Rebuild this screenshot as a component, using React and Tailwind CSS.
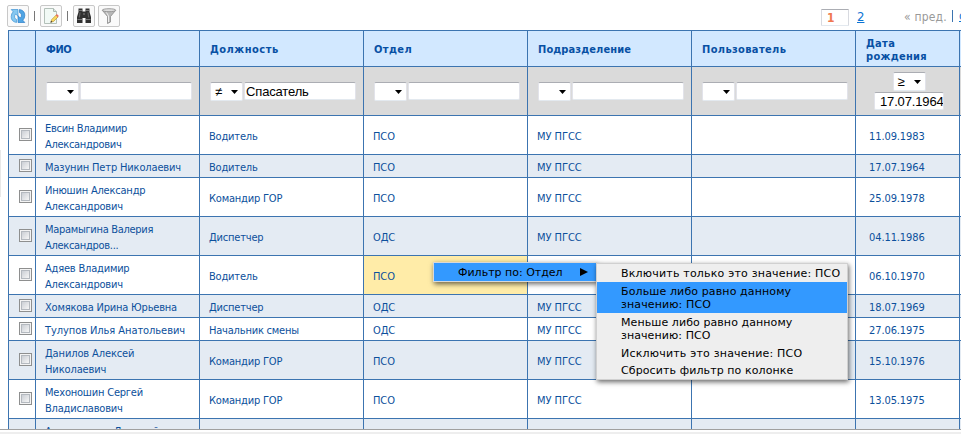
const COLS = 'grid grid-cols-[27px_164px_164px_164px_164px_164px_104px_2px] ml-2 w-[953px]';
const CELL = 'border-l border-t border-[#3c74b0] min-w-0 overflow-hidden';
const FIELD = "rounded-[2px] border border-t-[#abadb3] border-x-[#e2e3ea] border-b-[#e3e9ef] bg-white font-['Liberation_Sans',sans-serif] text-[13px] leading-none text-black";

const HEADERS = [
  ['ФИО', 'tracking-[-0.4px]'],
  ['Должность', 'tracking-[0.5px]'],
  ['Отдел', 'tracking-[0.4px]'],
  ['Подразделение', 'tracking-[0.1px]'],
  ['Пользователь', 'tracking-[0.35px]'],
];

const FILTERS = [
  ['', ''],
  ['≠', 'Спасатель'],
  ['', ''],
  ['', ''],
  ['', ''],
];

const ROWS = [
  { name: ['Евсин Владимир', 'Александрович'], job: 'Водитель', dept: 'ПСО', date: '11.09.1983', spacing: 'tracking-[-0.3px]' },
  { name: ['Мазунин Петр Николаевич'], job: 'Водитель', dept: 'ПСО', date: '17.07.1964', spacing: 'tracking-[-0.15px]' },
  { name: ['Инюшин Александр', 'Александрович'], job: 'Командир ГОР', dept: 'ПСО', date: '25.09.1978', spacing: 'tracking-[-0.2px]' },
  { name: ['Марамыгина Валерия', 'Александров...'], job: 'Диспетчер', dept: 'ОДС', date: '04.11.1986', spacing: 'tracking-[-0.3px]' },
  { name: ['Адяев Владимир', 'Александрович'], job: 'Водитель', dept: 'ПСО', date: '06.10.1970', spacing: 'tracking-[-0.2px]', active: true },
  { name: ['Хомякова Ирина Юрьевна'], job: 'Диспетчер', dept: 'ОДС', date: '18.07.1969', spacing: 'tracking-[-0.2px]' },
  { name: ['Тулупов Илья Анатольевич'], job: 'Начальник смены', dept: 'ОДС', date: '27.06.1975', spacing: 'tracking-[-0.07px]' },
  { name: ['Данилов Алексей', 'Николаевич'], job: 'Командир ГОР', dept: 'ПСО', date: '15.10.1976', spacing: 'tracking-[-0.12px]' },
  { name: ['Мехоношин Сергей', 'Владиславович'], job: 'Командир ГОР', dept: 'ПСО', date: '13.05.1975', spacing: 'tracking-[-0.2px]' },
  { name: ['Александров Дмитрий', '\u00a0'], job: '', dept: '', date: '', spacing: 'tracking-[-0.2px]' },
];

function ToolButton({ children }) {
  return (
    <button className="flex h-[22px] w-[22px] shrink-0 items-center justify-center rounded-[2px] border border-[#c8c8c8] bg-[#fafafa]">
      {children}
    </button>
  );
}

function RefreshIcon() {
  const arrow = 'M6.5 14.5Q1 13.5 1.2 8.5 1.3 5.500 3.2 3.8L1.2 1.5H8v6.7L5.7 6Q4.2 7.5 4.6 9.3 5 11 6.5 11.4z';
  return (
    <svg width="16" height="16" viewBox="0 0 16 16">
      <path d={arrow} fill="#86c8f0" stroke="#4094d4" strokeWidth=".7" />
      <path d={arrow} transform="rotate(180 8 8)" fill="#4fa5e4" stroke="#2a7bc6" strokeWidth=".7" />
    </svg>
  );
}

function EditIcon() {
  return (
    <svg width="16" height="16" viewBox="0 0 16 16">
      <path d="M1.500.5h9l3 3v12h-12z" fill="#f1f9f5" stroke="#b3c0b9" />
      <path d="M10.500.5v3h3" fill="#dbe8e1" stroke="#a9b8b0" />
      <path d="M7.800 14.200l.9-2.700 4.500-4.500 1.900 1.900-4.500 4.500z" fill="#f8d860" stroke="#b58a2a" strokeWidth=".6" />
      <path d="M12.700 7.300l1.200-1.300 2 2-1.300 1.300z" fill="#e8705f" />
      <path d="M7.400 14.800l.7-2 1.300 1.300z" fill="#333" />
    </svg>
  );
}

function BinocularsIcon() {
  return (
    <svg width="16" height="16" viewBox="0 0 16 16">
      <path d="M2.500 .5h4v3h3v-3h4v3.500L15 9v6H9.500v-5h-3v5H1V9l1.500-5z" fill="#303030" />
      <path d="M3 2.500h3M10 2.500h3M1.500 11.500h4.500M10 11.500h4.500" stroke="#777" />
      <path d="M4 4.500l-.7 5M12 4.500l.7 5" stroke="#5c5c5c" strokeWidth="1.200" />
      <path d="M7 6h2" stroke="#888" />
    </svg>
  );
}

function FunnelIcon() {
  return (
    <svg width="16" height="16" viewBox="0 0 16 16">
      <path d="M1.500 2.500L6.500 8.500v7l3-1.500V8.500l5-6z" fill="#b9b9b9" stroke="#8a8a8a" strokeWidth=".8" />
      <ellipse cx="8" cy="2.200" rx="6.800" ry="1.500" fill="#dedede" stroke="#8a8a8a" strokeWidth=".8" />
      <path d="M5.500 4.500l2 3.500V14" fill="none" stroke="#eee" />
    </svg>
  );
}

function Separator() {
  return (
    <div className="flex h-[22px] w-[11px] shrink-0 items-center justify-center">
      <span className="h-[10px] w-px bg-[#777]" />
    </div>
  );
}

function Operator({ value }) {
  return (
    <div className={`${FIELD} flex h-[19px] w-[33px] shrink-0 items-center justify-between px-1`}>
      <span>{value}</span>
      <svg width="7" height="4" viewBox="0 0 7 4" className="mt-px"><path d="M0 0h7L3.500 4z" fill="#000" /></svg>
    </div>
  );
}

function Checkbox() {
  return (
    <span className="flex h-[13px] w-[13px] items-center justify-center border border-[#8e8f8f] bg-[#f4f4f4]">
      <span className="h-[9px] w-[9px] border border-[#b4b9bf] bg-linear-to-br from-[#cbcfd5] to-[#f6f6f6]" />
    </span>
  );
}

function Row({ row, striped }) {
  const tall = row.name.length > 1;
  const bg = striped ? 'bg-[#e4ebf3]' : 'bg-white';
  const cell = `${CELL} flex items-center pl-[9px] pt-[3px]`;
  return (
    <div className={`${COLS} ${bg} ${tall ? 'h-[39px]' : 'h-[23px]'} shrink-0 text-[11px] leading-4 text-[#0c509c] whitespace-nowrap`}>
      <div className={`${CELL} flex items-center pl-[10px] pb-px`}><Checkbox /></div>
      <div className={`${cell} ${row.spacing}`}>
        <div>{row.name.map((line) => <div key={line}>{line}</div>)}</div>
      </div>
      <div className={`${cell} tracking-[-0.2px]`}>{row.job}</div>
      <div className={`${cell} ${row.active ? 'bg-[#ffeca8]' : ''} tracking-[-0.1px]`}>{row.dept}</div>
      <div className={`${cell} tracking-[-0.05px]`}>{row.job && !row.active && 'МУ ПГСС'}</div>
      <div className={cell} />
      <div className={`${CELL} flex items-center pl-[13px] pt-[3px] tracking-[-0.1px]`}>{row.date}</div>
      <div className={CELL} />
    </div>
  );
}

export default function App() {
  return (
    <div className="relative flex h-[434px] w-[961px] flex-col overflow-hidden bg-white font-['DejaVu_Sans_Condensed','DejaVu_Sans',sans-serif] [font-stretch:condensed]">
      <div className="flex h-[429px] shrink-0 flex-col overflow-hidden">
        <div className="flex h-[30px] shrink-0 items-start pl-[7px] pt-[5px]">
          <ToolButton><RefreshIcon /></ToolButton>
          <Separator />
          <ToolButton><EditIcon /></ToolButton>
          <Separator />
          <ToolButton><BinocularsIcon /></ToolButton>
          <div className="w-[3px] shrink-0" />
          <ToolButton><FunnelIcon /></ToolButton>
          <div className="ml-[701px] flex h-[22px] shrink-0 items-center text-[12px] whitespace-nowrap">
            <span className="mt-[3px] flex h-[17px] w-7 items-center rounded-[1px] border border-t-[#abadb3] border-x-[#d8dae0] border-b-[#e3e9ef] pl-[5px] pt-px font-['DejaVu_Sans',sans-serif] text-[12px] font-bold text-[#f07850]">1</span>
            <span className="ml-2 mt-px w-[8px] text-[13px] text-[#0c74d4] underline">2</span>
            <span className="ml-[39px] mt-px w-[43px] text-[12px] tracking-[0.2px] text-[#999]">« пред.</span>
            <span className="ml-[5px] h-3 w-px bg-[#3c74b0]" />
            <span className="ml-[6px] text-[#0c74d4] underline">след. »</span>
          </div>
        </div>

        <div className={`${COLS} h-9 shrink-0 bg-[#d2e8ff] text-[11px] font-bold leading-[13px] text-[#0850a4]`}>
          <div className={CELL} />
          {HEADERS.map(([label, spacing]) => (
            <div key={label} className={`${CELL} flex items-center pl-[10px] pt-[2px] ${spacing}`}>{label}</div>
          ))}
          <div className={`${CELL} flex items-center pl-[10px] pt-[2px] tracking-[0.3px]`}><div>Дата<br />рождения</div></div>
          <div className={CELL} />
        </div>

        <div className={`${COLS} h-[49px] shrink-0 bg-[#dadada]`}>
          <div className={CELL} />
          {FILTERS.map(([op, value], i) => (
            <div key={i} className={`${CELL} flex items-center pl-[10px]`}>
              <Operator value={op} />
              <div className={`${FIELD} ml-px flex h-[18px] w-[112px] items-center pl-px tracking-[-0.15px]`}>{value}</div>
            </div>
          ))}
          <div className={`${CELL} flex flex-col items-center pt-[5px]`}>
            <div className="ml-[3px]"><Operator value="≥" /></div>
            <div className={`${FIELD} mt-px ml-[3px] flex h-[18px] w-[70px] items-center overflow-hidden pl-[5px] tracking-[-0.15px]`}>17.07.1964</div>
          </div>
          <div className={CELL} />
        </div>

        {ROWS.map((row, i) => <Row key={i} row={row} striped={i % 2 === 1} />)}
      </div>
      <div className="h-px shrink-0 bg-[#a0a0a0]" />
      <div className="h-[2px] shrink-0 bg-white" />
      <div className="h-[2px] shrink-0 bg-[#eee]" />

      <div className="absolute left-0 top-[150px] h-[47px] w-px bg-[#e8e8e8]" />

      <div className="absolute left-[433px] top-[262px] flex h-5 w-[164px] items-center border border-[#d8d8d8] bg-[#3399ff] pl-6 font-['DejaVu_Sans',sans-serif] text-[11px] text-black shadow-[1px_2px_5px_rgba(0,0,0,0.6)] [font-stretch:normal]">
        <span className="w-[122px] pt-[2px] whitespace-nowrap">Фильтр по: Отдел</span>
        <svg width="8" height="8" viewBox="0 0 8 8"><path d="M0 0l8 4-8 4z" fill="#000" /></svg>
      </div>
      <div className="absolute left-[596px] top-[263px] flex h-[117px] w-[252px] flex-col border border-[#d0d0d0] bg-[#eee] pt-px font-['DejaVu_Sans',sans-serif] text-[11px] leading-[13px] text-black whitespace-nowrap shadow-[1px_2px_5px_rgba(0,0,0,0.6)] [font-stretch:normal]">
        <div className="h-[17px] pl-6 pt-[2px] tracking-[0.2px]">Включить только это значение: ПСО</div>
        <div className="h-[31px] bg-[#3399ff] pl-6 pt-[3px] tracking-[0.12px]">Больше либо равно данному<br />значению: ПСО</div>
        <div className="h-[31px] pl-6 pt-[3px] tracking-[0.08px]">Меньше либо равно данному<br />значению: ПСО</div>
        <div className="h-[17px] pl-6 pt-[3px] tracking-[0.2px]">Исключить это значение: ПСО</div>
        <div className="h-[17px] pl-6 pt-[3px] tracking-[0.1px]">Сбросить фильтр по колонке</div>
      </div>
    </div>
  );
}
